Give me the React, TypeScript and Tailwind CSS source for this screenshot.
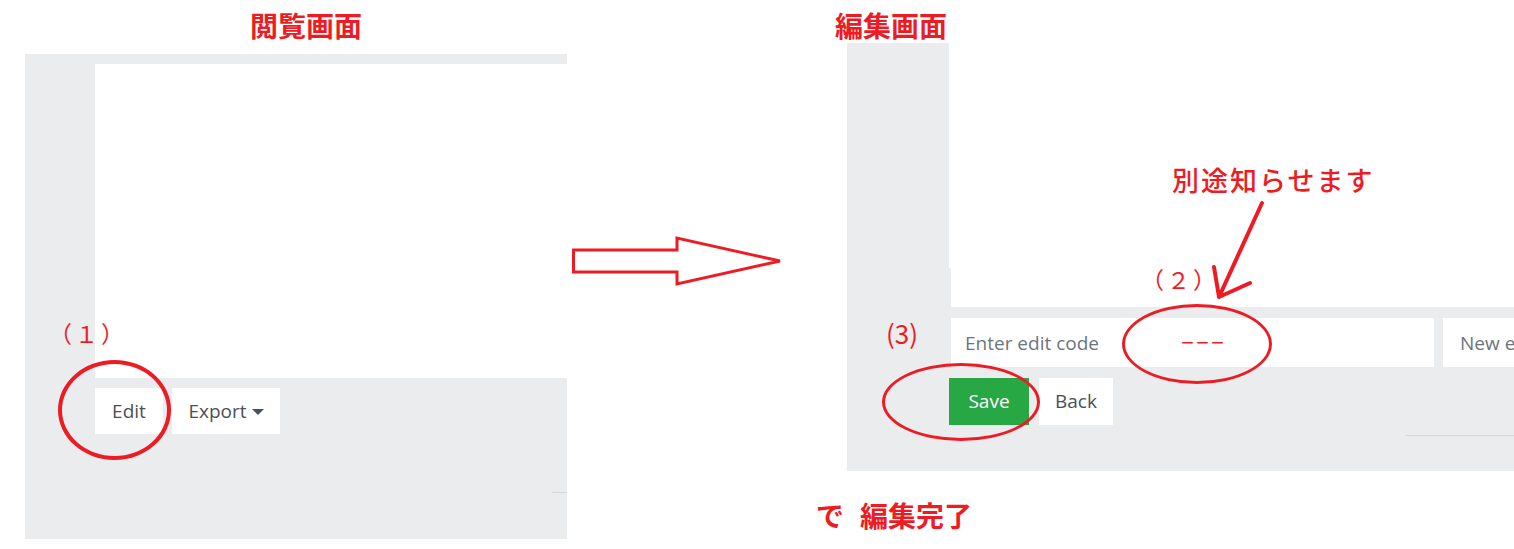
const ui = "font-['Open_Sans','Liberation_Sans',sans-serif]";
const jp = "font-['Noto_Sans_CJK_JP',sans-serif] text-[#ed1c24]";

function Ellipse({ className }: { className: string }) {
  return <div className={`absolute rounded-[50%] border-[#ed1c24] ${className}`} />;
}

export default function App() {
  return (
    <div className="relative w-[1514px] h-[549px] overflow-hidden bg-white">
      <div className="flex items-start">
        {/* 閲覧画面 */}
        <div className="ml-[25px] w-[542px] shrink-0 flex flex-col">
          <h2 className={`${jp} ml-[225px] mt-[11px] text-[28px] leading-[28px] font-bold`}>閲覧画面</h2>
          <div className="mt-[15px] h-[485px] bg-[#ebecee] pt-[10px]">
            <div className="ml-[70px] h-[314px] bg-white" />
            <div className={`${ui} ml-[70px] mt-[10px] flex gap-[9px] text-[19px] text-[#495057]`}>
              <button className="h-[46px] w-[68px] bg-white">Edit</button>
              <button className="h-[46px] w-[108px] bg-white flex items-center justify-center gap-[5px]">
                Export
                <span className="mt-[2px] border-x-[6px] border-t-[6px] border-x-transparent border-t-[#495057]" />
              </button>
            </div>
            <div className="mt-[58px] ml-auto h-px w-[15px] bg-[#d5d6d8]" />
          </div>
        </div>

        {/* arrow */}
        <div className="w-[249px] shrink-0 pl-[5px] pt-[236px]">
          <svg width="212" height="50" viewBox="0 0 212 50" fill="none" stroke="#ed1c24" strokeWidth="3">
            <path d="M1.5 14 H105 V2 L208 25 L105 48 V36 H1.5 Z" />
          </svg>
        </div>

        {/* 編集画面 */}
        <div className="shrink-0 flex flex-col">
          <h2 className={`${jp} ml-[19px] mt-[11px] text-[28px] leading-[28px] font-bold`}>編集画面</h2>
          <div className="ml-[31px] mt-[4px] w-[700px] h-[428px] bg-[#ebecee]">
            <div className="ml-[102px] h-[225px] bg-white" />
            <div className="ml-[104px] h-[39px] bg-white" />
            <div className={`${ui} ml-[104px] mt-[11px] flex gap-[9px] text-[19px]`}>
              <input
                readOnly
                placeholder="Enter edit code"
                className="h-[49px] w-[483px] shrink-0 bg-white px-[14px] outline-none placeholder:text-[#6c757d]"
              />
              <input
                readOnly
                placeholder="New edit code"
                className="h-[49px] w-[300px] shrink-0 bg-white px-[17px] outline-none placeholder:text-[#6c757d]"
              />
            </div>
            <div className={`${ui} ml-[102px] mt-[11px] flex gap-[10px] text-[19px]`}>
              <button className="h-[47px] w-[80px] bg-[#28a745] text-white">Save</button>
              <button className="h-[47px] w-[74px] bg-white text-[#495057]">Back</button>
            </div>
            <div className="mt-[10px] ml-[559px] h-px bg-[#d5d6d8]" />
          </div>
          <p className={`${jp} mt-[30px] flex gap-[16px] text-[28px] leading-[28px] font-bold`}>
            <span>で</span>
            <span>編集完了</span>
          </p>
        </div>
      </div>

      {/* annotations */}
      <span className={`${jp} absolute left-[49px] top-[319px] text-[23px] leading-[28px] tracking-[3px]`}>（１）</span>
      <Ellipse className="left-[58px] top-[360px] w-[113px] h-[100px] border-4" />

      <span className={`${jp} absolute left-[1172px] top-[165px] text-[27px] leading-[30px] tracking-[2px] font-medium`}>
        別途知らせます
      </span>
      <svg className="absolute left-[1205px] top-[195px]" width="70" height="110" viewBox="0 0 70 110" fill="none" stroke="#ed1c24" strokeWidth="4" strokeLinecap="round">
        <path d="M57 8 L14 102 M14 102 L9 72 M14 102 L45 88" />
      </svg>
      <span className={`${jp} absolute left-[1141px] top-[265px] text-[23px] leading-[28px] tracking-[3px]`}>（２）</span>
      <Ellipse className="left-[1122px] top-[304px] w-[150px] h-[80px] border-[3px]" />
      <span className={`${jp} absolute left-[1180px] top-[332px] text-[15px] leading-[20px] font-bold`}>－－－</span>

      <span className={`${jp} absolute left-[886px] top-[317px] text-[26px] leading-[32px]`}>(3)</span>
      <Ellipse className="left-[882px] top-[363px] w-[158px] h-[78px] border-[3px]" />
    </div>
  );
}
